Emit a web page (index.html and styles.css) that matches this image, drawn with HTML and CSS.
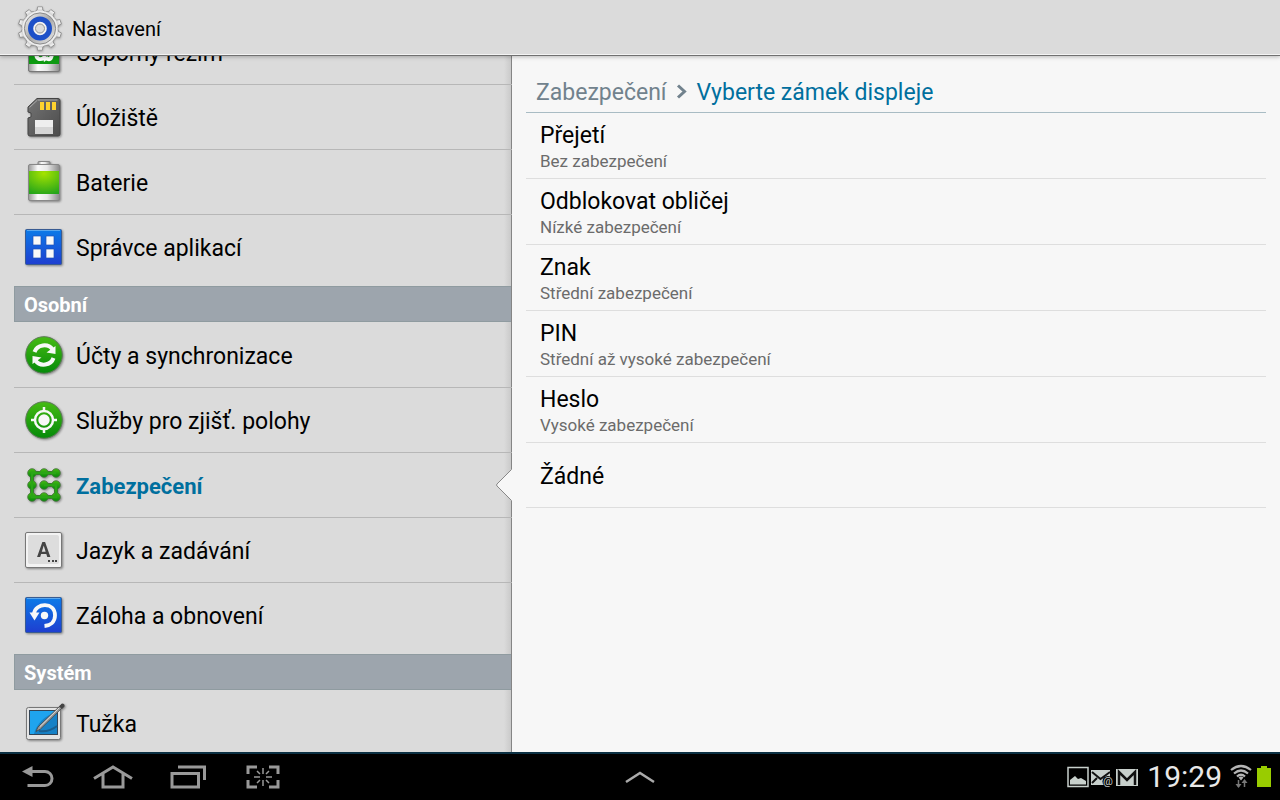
FILE: index.html
```html
<!DOCTYPE html>
<html lang="cs">
<head>
	<meta charset="UTF-8">
	<title>Nastavení</title>
	<link rel="stylesheet" href="styles.css">
</head>
<body>
	<header class="top">
		<svg class="gear" viewBox="0 0 44 46" aria-hidden="true">
			<defs>
				<linearGradient id="metal" x1="0" y1="0" x2="0" y2="1"><stop offset="0" stop-color="#fafafa"/><stop offset=".5" stop-color="#d0d0d0"/><stop offset="1" stop-color="#f4f4f4"/></linearGradient>
				<linearGradient id="ring" x1="0" y1="0" x2="1" y2="1"><stop offset="0" stop-color="#f5f5f5"/><stop offset=".5" stop-color="#a8a8a8"/><stop offset="1" stop-color="#eee"/></linearGradient>
				<linearGradient id="blue" x1="0" y1="0" x2="0" y2="1"><stop offset="0" stop-color="#0c7be8"/><stop offset="1" stop-color="#1e3ed0"/></linearGradient>
				<linearGradient id="green" x1="0" y1="0" x2="0" y2="1"><stop offset="0" stop-color="#45bb13"/><stop offset="1" stop-color="#058a0a"/></linearGradient>
				<linearGradient id="side" x1="0" y1="0" x2="1" y2="0"><stop offset="0" stop-color="#999"/><stop offset=".3" stop-color="#fafafa"/><stop offset=".6" stop-color="#e8e8e8"/><stop offset="1" stop-color="#8b8b8b"/></linearGradient>
				<radialGradient id="charge" cx=".5" cy=".1" r=".95"><stop offset="0" stop-color="#a6e300"/><stop offset="1" stop-color="#25a51a"/></radialGradient>
				<linearGradient id="card" x1="0" y1="0" x2="1" y2="1"><stop offset="0" stop-color="#747474"/><stop offset="1" stop-color="#4b4b4b"/></linearGradient>
				<g id="tooth"><path d="M17.500 5 L19.200 4 L19.600 .8 H24.400 L24.800 4 L26.500 5 L28 9 H16 Z"/></g>
			</defs>
			<g fill="url(#metal)" stroke="#8a8a8a" stroke-width=".8">
				<use href="#tooth"/>
				<use href="#tooth" transform="rotate(36 22 22.500)"/>
				<use href="#tooth" transform="rotate(72 22 22.500)"/>
				<use href="#tooth" transform="rotate(108 22 22.500)"/>
				<use href="#tooth" transform="rotate(144 22 22.500)"/>
				<use href="#tooth" transform="rotate(180 22 22.500)"/>
				<use href="#tooth" transform="rotate(216 22 22.500)"/>
				<use href="#tooth" transform="rotate(252 22 22.500)"/>
				<use href="#tooth" transform="rotate(288 22 22.500)"/>
				<use href="#tooth" transform="rotate(324 22 22.500)"/>
			</g>
			<circle cx="22" cy="22.500" r="17.700" fill="#ededed"/>
			<circle cx="22" cy="22.500" r="15.600" fill="url(#ring)" stroke="#8a8a8a" stroke-width="1"/>
			<circle cx="22" cy="22.500" r="9" fill="none" stroke="#1d50c8" stroke-width="6"/>
			<circle cx="22" cy="22.500" r="5.800" fill="#d9d9d9" stroke="#f2f2f2" stroke-width="2"/>
			<circle cx="22" cy="22.500" r="4.500" fill="#dcdcdc" stroke="#999" stroke-width="1"/>
		</svg>
		<h1>Nastavení</h1>
	</header>

	<main class="panes">
		<nav class="side" aria-label="Nastavení">
			<ul class="menu scrolled">
				<li><a href="#">
					<svg class="icon" viewBox="0 0 44 44"><rect x="6.500" y="4.500" width="31" height="37" rx="1.500" fill="url(#side)" stroke="#777"/><rect x="7" y="11" width="30" height="23" fill="#0e9a12"/><path d="M14 22c0 8 4 8 8 6M30 22c0 8-3 8-6 6" fill="none" stroke="#fff" stroke-width="4"/><path d="M20 24l7 4-5 4z" fill="#fff"/></svg>
					Úsporný režim</a></li>
				<li><a href="#">
					<svg class="icon" viewBox="0 0 44 44"><path d="M15 3.500H36a2 2 0 0 1 2 2V39a2 2 0 0 1-2 2H8a2 2 0 0 1-2-2V23l3-1v-4l-3-1v-5z" fill="url(#card)" stroke="#444"/><path d="M16 5H35.500M7.500 12.500L15.500 5" stroke="#aaa" stroke-width="1"/><path d="M18 7h4v8h-4zM24 7h4v8h-4zM30 7h4v8h-4z" fill="#ffd32e"/><rect x="13" y="25" width="18" height="14" fill="#eee"/><path d="M13 32h18v7H13z" fill="#d5d5d5"/></svg>
					Úložiště</a></li>
				<li><a href="#">
					<svg class="icon" viewBox="0 0 44 44"><path d="M16 4.500V2.500q0-1 1-1h10q1 0 1 1v2" fill="url(#side)" stroke="#888"/><rect x="6.500" y="4.500" width="31" height="36" rx="1.500" fill="url(#side)" stroke="#888"/><rect x="7" y="11" width="30" height="23" fill="url(#charge)"/></svg>
					Baterie</a></li>
				<li><a href="#">
					<svg class="icon" viewBox="0 0 44 44"><rect x="3.500" y="4.500" width="36" height="35" rx="1" fill="url(#blue)" stroke="#385b92"/><path d="M5 5.500h33" stroke="#5aa7ee"/><path d="M11 11h8v9h-8zM24 11h8v9h-8zM11 24h8v9h-8zM24 24h8v9h-8z" fill="#f8f8f8" stroke="#1c52b8" stroke-width=".7"/></svg>
					Správce aplikací</a></li>
			</ul>
			<h2>Osobní</h2>
			<ul class="menu">
				<li><a href="#">
					<svg class="icon" viewBox="0 0 44 44"><circle cx="22" cy="22" r="18.300" fill="url(#green)" stroke="#5c7a57"/><path d="M12.500 19C15 11.500 26 10 30.500 16.500M31.500 25C29 32.500 18 34 13.500 27.500" fill="none" stroke="#f8f8f8" stroke-width="4"/><path d="M33.500 13v8l-9-1.500zM10.500 31v-8l9 1.500z" fill="#f8f8f8"/></svg>
					Účty a synchronizace</a></li>
				<li><a href="#">
					<svg class="icon" viewBox="0 0 44 44"><circle cx="22" cy="22" r="18.300" fill="url(#green)" stroke="#5c7a57"/><circle cx="22" cy="22" r="9" fill="none" stroke="#f8f8f8" stroke-width="2.500"/><circle cx="22" cy="22" r="5.700" fill="#f8f8f8"/><path d="M22 9v4M22 31v4M9 22h4M31 22h4" stroke="#f8f8f8" stroke-width="2.500"/></svg>
					Služby pro zjišť. polohy</a></li>
				<li class="current"><a href="#" aria-current="page">
					<svg class="icon" viewBox="0 0 44 44"><path d="M34 10H10V34H34V22H22" fill="none" stroke="#456b3c" stroke-width="4"/><g fill="url(#green)" stroke="#4a7440" stroke-width=".8"><circle cx="10" cy="10" r="4.300"/><circle cx="22" cy="10" r="4.300"/><circle cx="34" cy="10" r="4.300"/><circle cx="10" cy="22" r="4.300"/><circle cx="22" cy="22" r="4.300"/><circle cx="34" cy="22" r="4.300"/><circle cx="10" cy="34" r="4.300"/><circle cx="22" cy="34" r="4.300"/><circle cx="34" cy="34" r="4.300"/></g><path d="M34 10H10V34H34V22H22" fill="none" stroke="#2ba516" stroke-width="2.500"/></svg>
					Zabezpečení
					<svg class="caret" viewBox="0 0 16 32"><path d="M16 0L1 15q-1 1 0 2L16 32z" fill="#f7f7f7"/><path d="M15.500 .5L1 15q-1 1 0 2L15.500 31.500" fill="none" stroke="#888"/></svg></a></li>
				<li><a href="#">
					<svg class="icon" viewBox="0 0 44 44"><rect x="3.500" y="4.500" width="36" height="35" rx="1.500" fill="#f3f3f3" stroke="#777"/><rect x="6" y="7" width="31" height="29" rx="2" fill="#ddd"/><text class="key" x="15" y="29">A</text><path d="M26 32h2v2h-2zM30 32h2v2h-2zM33 32h2v2h-2z" fill="#444"/></svg>
					Jazyk a zadávání</a></li>
				<li><a href="#">
					<svg class="icon" viewBox="0 0 44 44"><rect x="3.500" y="4.500" width="36" height="35" rx="1" fill="url(#blue)" stroke="#385b92"/><path d="M5 5.500h33" stroke="#5aa7ee"/><path d="M12 20.500C13.500 9.500 33 8.500 33 22.500C33 29 28 32.500 22.500 33" fill="none" stroke="#f8f8f8" stroke-width="3.800"/><path d="M7.500 19.500h10l-5 8z" fill="#f8f8f8"/><circle cx="22.500" cy="22.500" r="3.700" fill="#f8f8f8"/></svg>
					Záloha a obnovení</a></li>
			</ul>
			<h2>Systém</h2>
			<ul class="menu">
				<li><a href="#">
					<svg class="icon" viewBox="0 0 44 44"><rect x="4.500" y="6.500" width="34" height="32" rx="2" fill="#e4e4e4" stroke="#777"/><rect x="7.500" y="9.500" width="28" height="24" fill="#1fa4ee" stroke="#345"/><path d="M12 33c2-9 10-19 23-22v22z" fill="#1681c6"/><path d="M17 30c7 1 13-1 18-5" stroke="#1a5f90" stroke-width="2" fill="none"/><path d="M14 30.500l2-4.500L40 3l2 2L18.500 28z" fill="#999" stroke="#444" stroke-width=".8"/><path d="M37 5.500l3-3q3 0 2.500 3L40 8z" fill="#444"/><path d="M18 25.500L37 7" stroke="#ddd"/></svg>
					Tužka</a></li>
			</ul>
		</nav>

		<section class="detail">
			<div class="crumbs">
				<a href="#">Zabezpečení</a>
				<svg class="sep" viewBox="0 0 12 16" aria-hidden="true"><path d="M2 1.500L8.500 7.500L2 13.500" fill="none" stroke="#71828d" stroke-width="3"/></svg>
				<h2>Vyberte zámek displeje</h2>
			</div>
			<ul class="locks">
				<li><a href="#">Přejetí<small>Bez zabezpečení</small></a></li>
				<li><a href="#">Odblokovat obličej<small>Nízké zabezpečení</small></a></li>
				<li><a href="#">Znak<small>Střední zabezpečení</small></a></li>
				<li><a href="#">PIN<small>Střední až vysoké zabezpečení</small></a></li>
				<li><a href="#">Heslo<small>Vysoké zabezpečení</small></a></li>
				<li><a href="#">Žádné</a></li>
			</ul>
		</section>
	</main>

	<footer class="bar">
		<div class="keys">
			<button aria-label="Zpět"><svg width="36" height="26" viewBox="0 0 36 26"><path d="M11 7.500H25a7 7 0 0 1 0 14H7.500" fill="none" stroke="#999" stroke-width="3"/><path d="M2 7.500L12.500 2v11z" fill="#999"/></svg></button>
			<button aria-label="Domů"><svg width="40" height="26" viewBox="0 0 40 26"><path d="M1 14.500L20 3l19 11.500M10 10v13H30V10" fill="none" stroke="#999" stroke-width="3"/></svg></button>
			<button aria-label="Poslední aplikace"><svg width="36" height="26" viewBox="0 0 36 26"><path d="M2 9.500H28.500V23H2z" fill="none" stroke="#999" stroke-width="3"/><path d="M8 3H34.500V16" fill="none" stroke="#999" stroke-width="3"/></svg></button>
			<button aria-label="Snímek obrazovky"><svg width="34" height="26" viewBox="0 0 34 26"><path d="M2 10V3H11M23 3h9v7M32 16v7H23M11 23H2V16" fill="none" stroke="#999" stroke-width="3"/><path d="M17 4v6M17 16v6M8 13h6M20 13h6M11 7l3 3M23 7l-3 3M11 19l3-3M23 19l-3-3" stroke="#999" stroke-width="1.500"/></svg></button>
		</div>
		<button class="up" aria-label="Nabídka"><svg width="30" height="14" viewBox="0 0 30 14"><path d="M1 12L15 3l14 9" fill="none" stroke="#aaa" stroke-width="2.500"/></svg></button>
		<div class="status">
			<svg width="22" height="22" viewBox="0 0 22 22"><path d="M1 1.500H21V20.500H1z" fill="none" stroke="#c8d0cc" stroke-width="1.500"/><path d="M3 18.500V14l5-4 3 3 3-1 5 3v3.500z" fill="#c8d0cc"/></svg>
			<svg width="24" height="22" viewBox="0 0 24 22"><path d="M1 4H20V19H1z" fill="#c8d0cc"/><path d="M2 6l8.500 7L20 6M2 17l5-5M19 17l-5-5" stroke="#111" stroke-width="2" fill="none"/><circle cx="18" cy="15.500" r="5.500" fill="#000"/><text class="at" x="13" y="19">@</text></svg>
			<svg width="24" height="22" viewBox="0 0 24 22"><path d="M1 3H23V20H1z" fill="#c8d0cc"/><path d="M4 19V6l8 8 8-8v13" fill="none" stroke="#111" stroke-width="2.500"/></svg>
			<time>19:29</time>
			<svg width="22" height="26" viewBox="0 0 22 26"><g fill="none" stroke="#b5b5b5" stroke-width="2.200"><path d="M1 6Q11-2 21 6"/><path d="M4 9.500Q11 3.500 18 9.500"/><path d="M7 12.500Q11 9 15 12.500"/></g><path d="M11 16.500l-2.500-3q2.500-2 5 0z" fill="#b5b5b5"/><path d="M8.500 16v7M14.500 23v-6" stroke="#777" stroke-width="1.500"/><path d="M5.500 20h6l-3 4zM11.500 19h6l-3-4z" fill="#777"/></svg>
			<svg width="14" height="24" viewBox="0 0 14 24"><path d="M4 1h6v2h4v19H0V3h4z" fill="#99cc00"/></svg>
		</div>
	</footer>
</body>
</html>
```

FILE: styles.css
```css
*{margin:0;padding:0;box-sizing:border-box;}
body{height:100vh;display:flex;flex-direction:column;overflow:hidden;background-color:#dbdbdb;color:#000;font-family:Roboto,"Noto Sans",sans-serif;font-size:23px;}
h1,h2{font-weight:normal;}
ul{list-style:none;}
a{color:inherit;text-decoration:none;}
svg{display:block;flex:none;}
button{border:0;background:none;cursor:pointer;}

/* horní lišta */
.top{flex:none;display:flex;align-items:center;gap:10px;height:56px;padding:2px 18px 0;background-color:#dbdbdb;border-bottom:1px solid #707070;box-shadow:inset 0 -1px 0 #f4f4f4,0 1px 4px rgba(0,0,0,.25);position:relative;z-index:2;}
.top h1{font-size:20px;}
.gear{width:44px;height:46px;filter:drop-shadow(0 1px 1px rgba(0,0,0,.3));}

.panes{flex:1;min-height:0;display:grid;grid-template-columns:2fr 3fr;}

/* levý seznam */
.side{overflow:hidden;padding-left:14px;background:linear-gradient(to left,#858585 1px,#cacaca 1px,#dbdbdb 8px);}
.side h2{height:36px;margin:6px 1px 1px 0;padding-left:9px;background-color:#9da5ad;border:1px solid #8f9ba0;border-right:0;color:#fff;font-size:20px;font-weight:bold;line-height:36px;}
.menu.scrolled{margin-top:-36px;}
.menu li{border-bottom:1px solid #b7b7b7;}
.menu li:last-child{border-bottom-color:transparent;}
.menu a{display:flex;align-items:center;gap:10px;height:64px;padding:2px 0 0 8px;position:relative;}
.icon{width:44px;height:44px;margin-bottom:2px;filter:drop-shadow(1px 1px 1px rgba(0,0,0,.4));}
.key{font-family:Roboto,sans-serif;font-size:20px;font-weight:bold;fill:#444;}
.current{color:#006f9e;font-size:22px;font-weight:bold;}
.caret{position:absolute;right:0;top:16px;width:16px;height:32px;}

/* pravý panel */
.detail{overflow:hidden;padding:14px 14px 0;background-color:#f7f7f7;}
.crumbs{display:flex;align-items:center;gap:9px;height:43px;padding:2px 0 0 10px;border-bottom:1px solid #a9bcc4;color:#71828d;}
.crumbs h2{color:#006f9e;font-size:23px;}
.sep{width:12px;height:16px;}
.locks li{border-bottom:1px solid #dedede;}
.locks a{display:flex;flex-direction:column;justify-content:center;min-height:64px;padding:9px 14px 6px;line-height:28px;}
.locks small{color:#6b6b6b;font-size:17px;line-height:22px;}

/* systémová lišta */
.bar{flex:none;display:grid;grid-template-columns:1fr auto 1fr;align-items:center;height:48px;background-color:#000;border-top:2px solid #0b3043;}
.keys{display:flex;}
.keys button{display:flex;align-items:center;justify-content:center;width:75px;height:46px;}
.up{padding:0 8px;}
.status{display:flex;align-items:center;justify-content:flex-end;gap:1px;padding-right:9px;}
.status time{margin:0 7px;color:#e8e8e8;font-size:30px;line-height:40px;}
.status svg:last-child{margin-left:4px;}
.at{font-family:Roboto,sans-serif;font-size:11px;fill:#c8d0cc;}
```
